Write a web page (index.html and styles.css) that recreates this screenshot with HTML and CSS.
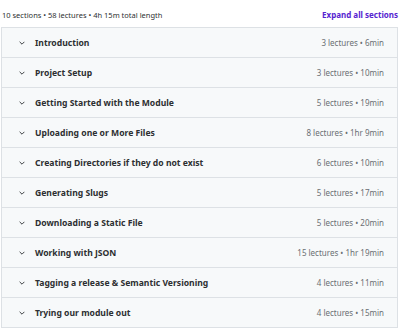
FILE: index.html
```html
<!DOCTYPE html>
<html lang="en">
<head>
<meta charset="UTF-8">
<meta name="viewport" content="width=device-width, initial-scale=1.0">
<link rel="stylesheet" href="styles.css">
<title>Course content</title>
</head>
<body>
<div class="curriculum">
    <div class="summary">
        <span class="stats">10 sections • 58 lectures • 4h 15m total length</span>
        <button class="expand-btn">Expand all sections</button>
    </div>
    <div class="sections">
        <div class="section">
            <div class="section-title"><svg class="chevron" viewBox="0 0 10 6"><path d="M1 1l4 4 4-4"/></svg>Introduction</div>
            <div class="section-meta">3 lectures • 6min</div>
        </div>
        <div class="section">
            <div class="section-title"><svg class="chevron" viewBox="0 0 10 6"><path d="M1 1l4 4 4-4"/></svg>Project Setup</div>
            <div class="section-meta">3 lectures • 10min</div>
        </div>
        <div class="section">
            <div class="section-title"><svg class="chevron" viewBox="0 0 10 6"><path d="M1 1l4 4 4-4"/></svg>Getting Started with the Module</div>
            <div class="section-meta">5 lectures • 19min</div>
        </div>
        <div class="section">
            <div class="section-title"><svg class="chevron" viewBox="0 0 10 6"><path d="M1 1l4 4 4-4"/></svg>Uploading one or More Files</div>
            <div class="section-meta">8 lectures • 1hr 9min</div>
        </div>
        <div class="section">
            <div class="section-title"><svg class="chevron" viewBox="0 0 10 6"><path d="M1 1l4 4 4-4"/></svg>Creating Directories if they do not exist</div>
            <div class="section-meta">6 lectures • 10min</div>
        </div>
        <div class="section">
            <div class="section-title"><svg class="chevron" viewBox="0 0 10 6"><path d="M1 1l4 4 4-4"/></svg>Generating Slugs</div>
            <div class="section-meta">5 lectures • 17min</div>
        </div>
        <div class="section">
            <div class="section-title"><svg class="chevron" viewBox="0 0 10 6"><path d="M1 1l4 4 4-4"/></svg>Downloading a Static File</div>
            <div class="section-meta">5 lectures • 20min</div>
        </div>
        <div class="section">
            <div class="section-title"><svg class="chevron" viewBox="0 0 10 6"><path d="M1 1l4 4 4-4"/></svg>Working with JSON</div>
            <div class="section-meta">15 lectures • 1hr 19min</div>
        </div>
        <div class="section">
            <div class="section-title"><svg class="chevron" viewBox="0 0 10 6"><path d="M1 1l4 4 4-4"/></svg>Tagging a release &amp; Semantic Versioning</div>
            <div class="section-meta">4 lectures • 11min</div>
        </div>
        <div class="section">
            <div class="section-title"><svg class="chevron" viewBox="0 0 10 6"><path d="M1 1l4 4 4-4"/></svg>Trying our module out</div>
            <div class="section-meta">4 lectures • 15min</div>
        </div>
    </div>
</div>
</body>
</html>
```
FILE: styles.css
```css
body {
    margin: 0;
    background: #ffffff;
    font-family: "Noto Sans", Arial, sans-serif;
    color: #2d2f31;
}

.curriculum {
    padding: 0 2px 0 1px;
}

.summary {
    display: flex;
    justify-content: space-between;
    align-items: center;
    height: 27px;
    padding-top: 2px;
    box-sizing: border-box;
}

.stats {
    font-size: 7.5px;
    color: #2d2f31;
    padding-left: 1px;
}

.expand-btn {
    border: none;
    background: none;
    padding: 0;
    font-family: inherit;
    font-size: 8px;
    font-weight: 700;
    color: #5624d0;
    cursor: pointer;
}

.sections {
    border: 1px solid #dde1e5;
    border-bottom: none;
}

.section {
    display: flex;
    justify-content: space-between;
    align-items: center;
    height: 29px;
    padding: 0 13px 0 17px;
    background: #f7f9fa;
    border-bottom: 1px solid #dde1e5;
}

.section-title {
    display: flex;
    align-items: center;
    font-size: 8.6px;
    font-weight: 700;
    color: #2d2f31;
}

.chevron {
    width: 6px;
    height: 4px;
    margin-right: 10px;
    fill: none;
    stroke: #2d2f31;
    stroke-width: 1.5;
}

.section-meta {
    font-size: 8px;
    color: #6a6f73;
}
```
